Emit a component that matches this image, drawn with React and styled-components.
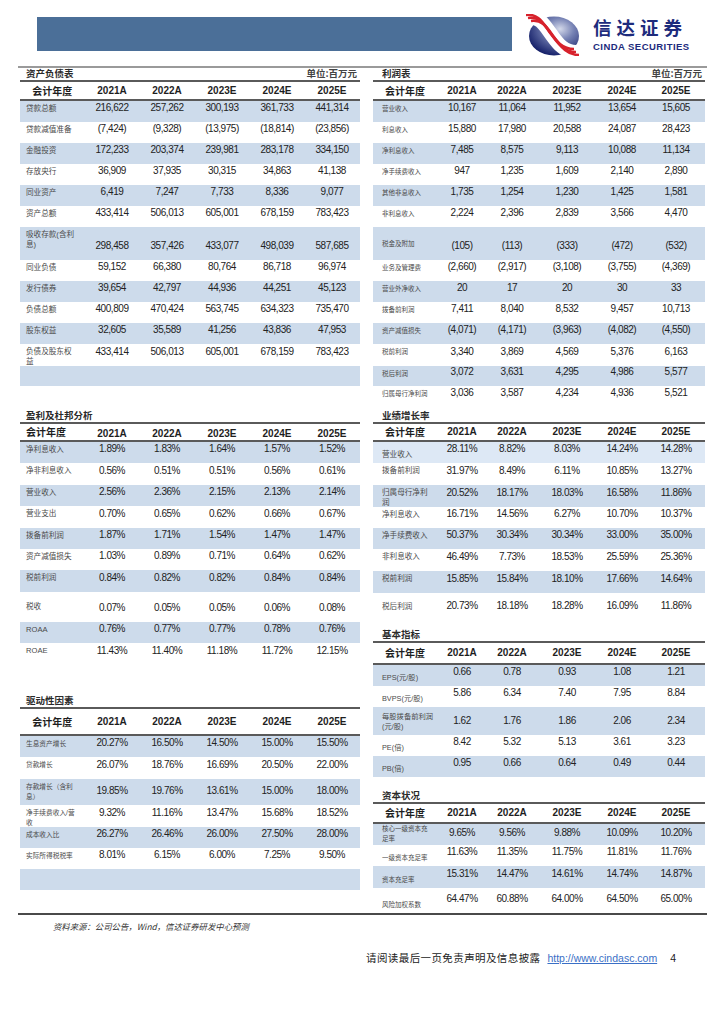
import React from 'react';
import styled, { createGlobalStyle } from 'styled-components';

const GlobalStyle = createGlobalStyle`
  * { box-sizing: border-box; }
  body {
    margin: 0;
    background: #fff;
    color: #222;
    font-family: "Liberation Sans", "Noto Sans CJK SC", sans-serif;
  }
`;

const BLUE = '#cddbeb';
const LIGHT = '#dde8f5';
const YEARS = ['2021A', '2022A', '2023E', '2024E', '2025E'];
const LEFT_COLS = '64.5px repeat(5, 55px)';
const RIGHT_COLS = '64px 50px 50px 60px 50px 58px';

const Page = styled.div`
  width: 724px;
  height: 1024px;
  overflow: hidden;
`;

const Header = styled.header`
  height: 66px;
  display: flex;
  align-items: flex-start;
  padding-left: 37px;
`;

const Banner = styled.div`
  width: 475px;
  height: 34px;
  margin-top: 17px;
  background: #4b6f98;
`;

const Logo = styled.div`
  display: flex;
  align-items: flex-start;
  margin-left: 14px;
  svg { margin-top: 14px; }
`;

const LogoText = styled.div`
  display: flex;
  flex-direction: column;
  margin: 18px 0 0 13px;
  color: #1d2b7c;
`;

const LogoCn = styled.span`
  font-family: "Noto Sans CJK SC", sans-serif;
  font-weight: 700;
  font-size: 18.5px;
  line-height: 19px;
  letter-spacing: 5px;
`;

const LogoEn = styled.span`
  font-weight: 700;
  font-size: 9.5px;
  line-height: 10px;
  letter-spacing: 0.45px;
  margin-top: 5px;
`;

const Rule = styled.div`
  margin: 0 17px 0 18px;
  border-top: 2px solid ${p => p.$c};
`;

const Columns = styled.div`
  height: 845px;
  display: grid;
  grid-template-columns: 340px 332px;
  column-gap: 13px;
  padding-left: 20px;
  align-items: start;
`;

const Column = styled.div`
  display: flex;
  flex-direction: column;
`;

const Section = styled.section`
  margin-top: ${p => p.$mt || 0}px;
`;

const TitleBar = styled.div`
  height: ${p => p.$h}px;
  display: flex;
  justify-content: space-between;
  align-items: flex-end;
  padding: 0 3px 1px ${p => p.$pl}px;
  border-bottom: 2px solid #5a5a5a;
`;

const Title = styled.span`
  font-family: "Noto Sans CJK SC", sans-serif;
  font-weight: 700;
  font-size: 9.5px;
  line-height: 12px;
  color: #2a2a2a;
`;

const Unit = styled(Title)`
  color: #444;
`;

const HeadRow = styled.div`
  height: ${p => p.$h}px;
  display: grid;
  grid-template-columns: ${p => p.$cols};
  border-bottom: 2px solid #5a5a5a;
`;

const HeadLabel = styled.div`
  display: flex;
  justify-content: ${p => (p.$left ? 'flex-start' : 'center')};
  align-items: ${p => (p.$left ? 'flex-start' : 'center')};
  padding: ${p => (p.$left ? `2px 0 0 ${p.$pl}px` : '0')};
  font-family: "Noto Sans CJK SC", sans-serif;
  font-weight: 700;
  font-size: 10px;
  line-height: 12px;
  color: #1e1e1e;
`;

const Year = styled.div`
  display: flex;
  justify-content: center;
  align-items: center;
  font-weight: 700;
  font-size: 10px;
  line-height: 12px;
  color: #1e1e1e;
  padding-top: ${p => (p.$low ? 3 : 0)}px;
`;

const Row = styled.div`
  height: ${p => p.$h}px;
  display: grid;
  grid-template-columns: ${p => p.$cols};
  background: ${p => p.$bg};
`;

const vaMap = { top: 'flex-start', mid: 'center', bottom: 'flex-end' };

const Label = styled.div`
  display: flex;
  align-items: ${p => vaMap[p.$va]};
  padding: ${p => (p.$va === 'bottom' ? '0 0 4px' : p.$va === 'mid' ? '0' : '3px 0 0')} ${p => p.$pl}px;
  font-size: ${p => p.$fs}px;
  line-height: 9.5px;
  white-space: pre-line;
  color: #4a4a4a;
`;

const Num = styled.div`
  display: flex;
  justify-content: center;
  align-items: flex-end;
  padding-bottom: 8px;
  font-size: 10px;
  line-height: 12px;
  letter-spacing: -0.45px;
  color: #222;
`;

const Source = styled.p`
  margin: 5px 0 0 53px;
  font-family: "Noto Sans CJK SC", sans-serif;
  font-style: italic;
  font-size: 8.4px;
  line-height: 12px;
  color: #333;
`;

const Footer = styled.footer`
  margin-top: 19px;
  display: flex;
  justify-content: flex-end;
  align-items: baseline;
  padding-right: 48px;
  font-size: 10.5px;
  line-height: 13px;
  color: #222;
`;

const Notice = styled.span`
  font-family: "Noto Sans CJK SC", sans-serif;
  letter-spacing: 0.4px;
`;

const Link = styled.a`
  margin: 0 13px 0 7px;
  color: #3a6fc6;
  text-decoration: underline;
  font-size: 10.5px;
`;

const LogoMark = () => (
  <svg width="54" height="42" viewBox="0 0 54 42">
    <defs>
      <radialGradient id="sph" cx="62%" cy="32%" r="70%">
        <stop offset="0" stopColor="#d4d9ea" />
        <stop offset="0.4" stopColor="#7682b4" />
        <stop offset="1" stopColor="#16216a" />
      </radialGradient>
      <clipPath id="clipE">
        <rect x="0" y="0" width="54" height="42" />
      </clipPath>
    </defs>
    <ellipse cx="28" cy="22" rx="25" ry="19.5" fill="url(#sph)" />
    <g clipPath="url(#clipE)" fill="none">
      <path d="M2 4 C14 2 19 12 25 20 S37 38 50 38" stroke="#fff" strokeWidth="14" />
      <path d="M-1 1 C12 -1 17 9 23 17 S35 35 48 35" stroke="#d7222c" strokeWidth="2.6" />
      <path d="M2 4 C14 2 19 12 25 20 S37 38 50 38" stroke="#d7222c" strokeWidth="2.6" />
      <path d="M5 7 C17 5 22 15 28 23 S40 41 53 41" stroke="#d7222c" strokeWidth="2.6" />
    </g>
  </svg>
);

const balance = {
  title: '资产负债表', unit: '单位:百万元', cols: LEFT_COLS, pl: 6, fs: 7.6, va: 'top',
  titleH: 14, headH: 19,
  rows: [
    ['贷款总额', '216,622 257,262 300,193 361,733 441,314', 21],
    ['贷款减值准备', '(7,424) (9,328) (13,975) (18,814) (23,856)', 21],
    ['金融投资', '172,233 203,374 239,981 283,178 334,150', 21],
    ['存放央行', '36,909 37,935 30,315 34,863 41,138', 21],
    ['同业资产', '6,419 7,247 7,733 8,336 9,077', 21],
    ['资产总额', '433,414 506,013 605,001 678,159 783,423', 21],
    ['吸收存款(含利\n息)', '298,458 357,426 433,077 498,039 587,685', 33],
    ['同业负债', '59,152 66,380 80,764 86,718 96,974', 21],
    ['发行债券', '39,654 42,797 44,936 44,251 45,123', 21],
    ['负债总额', '400,809 470,424 563,745 634,323 735,470', 21],
    ['股东权益', '32,605 35,589 41,256 43,836 47,953', 21],
    ['负债及股东权\n益', '433,414 506,013 605,001 678,159 783,423', 22],
    ['', '', 20],
  ],
};

const income = {
  title: '利润表', unit: '单位:百万元', cols: RIGHT_COLS, pl: 9, fs: 6.5, va: 'top',
  titleH: 14, headH: 19,
  rows: [
    ['营业收入', '10,167 11,064 11,952 13,654 15,605', 21],
    ['利息收入', '15,880 17,980 20,588 24,087 28,423', 21],
    ['净利息收入', '7,485 8,575 9,113 10,088 11,134', 21],
    ['净手续费收入', '947 1,235 1,609 2,140 2,890', 21],
    ['其他非息收入', '1,735 1,254 1,230 1,425 1,581', 21],
    ['非利息收入', '2,224 2,396 2,839 3,566 4,470', 21],
    ['税金及附加', '(105) (113) (333) (472) (532)', 33, 'mid'],
    ['业务及管理费', '(2,660) (2,917) (3,108) (3,755) (4,369)', 21],
    ['营业外净收入', '20 17 20 30 33', 21],
    ['拨备前利润', '7,411 8,040 8,532 9,457 10,713', 21],
    ['资产减值损失', '(4,071) (4,171) (3,963) (4,082) (4,550)', 21],
    ['税前利润', '3,340 3,869 4,569 5,376 6,163', 22],
    ['税后利润', '3,072 3,631 4,295 4,986 5,577', 20],
    ['归属母行净利润', '3,036 3,587 4,234 4,936 5,521', 21],
  ],
};

const dupont = {
  title: '盈利及杜邦分析', cols: LEFT_COLS, pl: 6, fs: 7.6, va: 'top', mt: 22,
  titleH: 16, headH: 18, headLeft: true,
  rows: [
    ['净利息收入', '1.89% 1.83% 1.64% 1.57% 1.52%', 21],
    ['净非利息收入', '0.56% 0.51% 0.51% 0.56% 0.61%', 22],
    ['营业收入', '2.56% 2.36% 2.15% 2.13% 2.14%', 21],
    ['营业支出', '0.70% 0.65% 0.62% 0.66% 0.67%', 22],
    ['拨备前利润', '1.87% 1.71% 1.54% 1.47% 1.47%', 21],
    ['资产减值损失', '1.03% 0.89% 0.71% 0.64% 0.62%', 21],
    ['税前利润', '0.84% 0.82% 0.82% 0.84% 0.84%', 22],
    ['税收', '0.07% 0.05% 0.05% 0.06% 0.08%', 30, 'mid'],
    ['ROAA', '0.76% 0.77% 0.77% 0.78% 0.76%', 21],
    ['ROAE', '11.43% 11.40% 11.18% 11.72% 12.15%', 22],
  ],
};

const drivers = {
  title: '驱动性因素', cols: LEFT_COLS, pl: 6, fs: 6.7, va: 'top', mt: 30,
  titleH: 14, headH: 27,
  rows: [
    ['生息资产增长', '20.27% 16.50% 14.50% 15.00% 15.50%', 21],
    ['贷款增长', '26.07% 18.76% 16.69% 20.50% 22.00%', 22],
    ['存款增长（含利\n息）', '19.85% 19.76% 13.61% 15.00% 18.00%', 26],
    ['净手续费收入/营\n收', '9.32% 11.16% 13.47% 15.68% 18.52%', 22],
    ['成本收入比', '26.27% 26.46% 26.00% 27.50% 28.00%', 21],
    ['实际所得税税率', '8.01% 6.15% 6.00% 7.25% 9.50%', 21],
    ['', '', 21],
  ],
};

const growth = {
  title: '业绩增长率', cols: RIGHT_COLS, pl: 9, fs: 7.6, va: 'top', mt: 1,
  titleH: 16, headH: 18, firstLight: true,
  rows: [
    ['营业收入', '28.11% 8.82% 8.03% 14.24% 14.28%', 21, 'bottom'],
    ['拨备前利润', '31.97% 8.49% 6.11% 10.85% 13.27%', 22],
    ['归属母行净利\n润', '20.52% 18.17% 18.03% 16.58% 11.86%', 22],
    ['净利息收入', '16.71% 14.56% 6.27% 10.70% 10.37%', 21],
    ['净手续费收入', '50.37% 30.34% 30.34% 33.00% 35.00%', 21],
    ['非利息收入', '46.49% 7.73% 18.53% 25.59% 25.36%', 22],
    ['税前利润', '15.85% 15.84% 18.10% 17.66% 14.64%', 22],
    ['税后利润', '20.73% 18.18% 18.28% 16.09% 11.86%', 27, 'mid'],
  ],
};

const basics = {
  title: '基本指标', cols: RIGHT_COLS, pl: 9, fs: 7.3, va: 'bottom', mt: 6,
  titleH: 17, headH: 22,
  rows: [
    ['EPS(元/股)', '0.66 0.78 0.93 1.08 1.21', 21],
    ['BVPS(元/股)', '5.86 6.34 7.40 7.95 8.84', 21],
    ['每股拨备前利润\n(元/股)', '1.62 1.76 1.86 2.06 2.34', 28],
    ['PE(倍)', '8.42 5.32 5.13 3.61 3.23', 21],
    ['PB(倍)', '0.95 0.66 0.64 0.49 0.44', 21],
  ],
};

const capital = {
  title: '资本状况', cols: RIGHT_COLS, pl: 9, fs: 6.5, va: 'bottom', mt: 14,
  titleH: 13, headH: 20,
  rows: [
    ['核心一级资本充\n足率', '9.65% 9.56% 9.88% 10.09% 10.20%', 21],
    ['一级资本充足率', '11.63% 11.35% 11.75% 11.81% 11.76%', 21],
    ['资本充足率', '15.31% 14.47% 14.61% 14.74% 14.87%', 22],
    ['风险加权系数', '64.47% 60.88% 64.00% 64.50% 65.00%', 25],
  ],
};

const FinTable = ({ t }) => (
  <Section $mt={t.mt}>
    <TitleBar $h={t.titleH} $pl={t.pl}>
      <Title>{t.title}</Title>
      {t.unit && <Unit>{t.unit}</Unit>}
    </TitleBar>
    <HeadRow $cols={t.cols} $h={t.headH}>
      <HeadLabel $left={t.headLeft} $pl={t.pl}>会计年度</HeadLabel>
      {YEARS.map(y => <Year key={y} $low={t.headLeft}>{y}</Year>)}
    </HeadRow>
    {t.rows.map(([label, vals, h, va], i) => (
      <Row
        key={i}
        $cols={t.cols}
        $h={h}
        $bg={i % 2 ? 'transparent' : i === 0 && t.firstLight ? LIGHT : BLUE}
      >
        <Label $pl={t.pl} $fs={t.fs} $va={va || t.va}>{label}</Label>
        {vals && vals.split(' ').map((v, j) => <Num key={j}>{v}</Num>)}
      </Row>
    ))}
  </Section>
);

const App = () => (
  <>
    <GlobalStyle />
    <Page>
      <Header>
        <Banner />
        <Logo>
          <LogoMark />
          <LogoText>
            <LogoCn>信达证券</LogoCn>
            <LogoEn>CINDA SECURITIES</LogoEn>
          </LogoText>
        </Logo>
      </Header>
      <Rule $c="#9a9a9a" />
      <Columns>
        <Column>
          <FinTable t={balance} />
          <FinTable t={dupont} />
          <FinTable t={drivers} />
        </Column>
        <Column>
          <FinTable t={income} />
          <FinTable t={growth} />
          <FinTable t={basics} />
          <FinTable t={capital} />
        </Column>
      </Columns>
      <Rule $c="#4a4a4a" />
      <Source>资料来源：公司公告，Wind，信达证券研发中心预测</Source>
      <Footer>
        <Notice>请阅读最后一页免责声明及信息披露</Notice>
        <Link href="#">http://www.cindasc.com</Link>
        <span>4</span>
      </Footer>
    </Page>
  </>
);

export default App;
